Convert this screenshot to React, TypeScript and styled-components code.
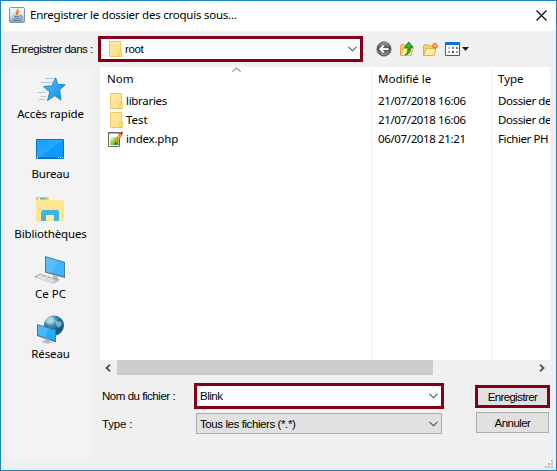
import React from "react";
import styled, { createGlobalStyle } from "styled-components";

const Page = createGlobalStyle`
  body { margin: 0; overflow: hidden; }
  * { box-sizing: border-box; }
  svg { display: block; flex: none; overflow: visible; }
`;

const Dialog = styled.div`
  width: 557px;
  height: 471px;
  display: flex;
  flex-direction: column;
  background: #f0f0f0;
  border: 1px solid #1883c5;
  color: #000;
  font: 11.5px/16px "Noto Sans", "Open Sans", sans-serif;
`;

const Text = styled.span<{ $ls?: number }>`
  white-space: nowrap;
  letter-spacing: ${(p) => p.$ls ?? 0}px;
`;

const Classic = styled(Text)`
  font: 11.5px/16px "Liberation Sans", Arial, sans-serif;
`;

const TitleBar = styled.header`
  height: 30px;
  flex: none;
  display: flex;
  align-items: center;
  padding: 0 9px 2px 8px;
  gap: 5px;
  background: #fff;
  & > svg:last-child { margin-left: auto; }
`;

const LookupBar = styled.div`
  height: 36px;
  flex: none;
  display: flex;
  align-items: center;
  padding-left: 10px;
`;

const LookupLabel = styled(Classic)`
  width: 87px;
`;

const Outlined = styled.div<{ $w: number; $h: number }>`
  width: ${(p) => p.$w}px;
  height: ${(p) => p.$h}px;
  display: flex;
  align-items: center;
  border: 3px solid #84001a;
  background: #fff;
  padding: 0 3px;
  & > svg:last-child { margin-left: auto; }
`;

const LookupField = styled(Outlined)`
  padding-left: 5px;
  gap: 3px;
`;

const Tools = styled.div`
  display: flex;
  align-items: center;
  gap: 7px;
  margin-left: 13px;
`;

const Content = styled.div`
  flex: 1;
  display: flex;
  padding: 0 6px 12px;
  gap: 6px;
`;

const Places = styled.nav`
  width: 87px;
  background: #f3f3f3;
  padding-top: 7px;
`;

const Place = styled.div`
  height: 60px;
  display: flex;
  flex-direction: column;
  align-items: center;
  & > svg { margin-right: 2px; }
`;

const Main = styled.main`
  width: 450px;
  display: flex;
  flex-direction: column;
`;

const List = styled.div`
  height: 293px;
  flex: none;
  display: grid;
  grid-template-columns: 271px 120px 59px;
  background: #fff;
  overflow: hidden;
`;

const Column = styled.div<{ $line?: boolean }>`
  overflow: hidden;
  padding-left: ${(p) => (p.$line ? 6 : 7)}px;
  border-left: ${(p) => (p.$line ? "1px solid #e8f1fb" : "none")};
`;

const Head = styled.div`
  height: 24px;
  display: flex;
  align-items: center;
  position: relative;
`;

const SortMark = styled.div`
  position: absolute;
  left: 125px;
  top: 0;
`;

const Cell = styled.div`
  height: 19px;
  display: flex;
  align-items: center;
  gap: 3px;
`;

const ScrollBar = styled.div`
  height: 15px;
  flex: none;
  display: flex;
  align-items: center;
  padding: 0 5px;
`;

const Thumb = styled.div`
  width: 316px;
  height: 15px;
  margin: 0 auto 0 6px;
  background: #cdcdcd;
`;

const Form = styled.div`
  display: grid;
  grid-template-columns: 94px 250px 31px 75px;
  grid-template-rows: 26px 22px;
  row-gap: 4px;
  padding-top: 8px;
  align-items: center;
  & > span { padding-left: 2px; }
`;

const TypeSelect = styled.div`
  height: 21px;
  width: 246px;
  margin-left: 2px;
  margin-top: -1px;
  display: flex;
  align-items: center;
  padding: 1px 3px 0;
  background: #e1e1e1;
  border: 1px solid #adadad;
  & > svg { margin-left: auto; }
`;

const Button = styled.button<{ $primary?: boolean }>`
  grid-column: 4;
  justify-self: center;
  width: ${(p) => (p.$primary ? 75 : 73)}px;
  height: ${(p) => (p.$primary ? 23 : 21)}px;
  padding: 0;
  margin-top: ${(p) => (p.$primary ? 1 : -3)}px;
  border: ${(p) => (p.$primary ? "3px solid #84001a" : "1px solid #adadad")};
  background: #e1e1e1;
  color: #000;
  display: flex;
  align-items: center;
  justify-content: center;
`;

const Grip = styled.div`
  position: absolute;
  left: 545px;
  top: 460px;
`;

const Chevron = () => (
  <svg width="9" height="6" viewBox="0 0 9 6">
    <path d="M.5.8 4.5 4.8 8.5.8" fill="none" stroke="#505050" strokeWidth="1.1" />
  </svg>
);

const JavaIcon = () => (
  <svg width="16" height="16" viewBox="0 0 16 16">
    <defs>
      <linearGradient id="jv" x1="0" y1="0" x2="0" y2="1">
        <stop stopColor="#f4f6f8" /><stop offset=".5" stopColor="#dce4ea" /><stop offset="1" stopColor="#84a2b8" />
      </linearGradient>
    </defs>
    <rect x=".5" y=".5" width="15" height="15" rx="1" fill="url(#jv)" stroke="#8297a8" />
    <path d="M8.7 1.8C9.5 4 5.6 4.6 7.6 8M10.5 4C7.8 5.3 8.9 6 8.7 8" fill="none" stroke="#e27a25" strokeWidth="1.3" />
    <path d="M4.5 8.8c1 .8 5 .8 6.5 0M5.2 10.8c1.5.7 4 .7 5.2 0M3.6 12.7c2 1.2 7.4 1 8.8-.2M11.4 8.8c2.6-.5 2.3 2-.2 2.3" fill="none" stroke="#47708f" strokeWidth="1" />
  </svg>
);

const CloseIcon = () => (
  <svg width="11" height="11" viewBox="0 0 11 11">
    <path d="m.5.5 10 10m0-10-10 10" stroke="#000" strokeWidth="1.1" />
  </svg>
);

const Folder = () => (
  <svg width="16" height="16" viewBox="0 0 16 16">
    <defs>
      <linearGradient id="fd" x1="0" y1="0" x2="1" y2="1">
        <stop stopColor="#ffe9a2" /><stop offset="1" stopColor="#ffdf85" />
      </linearGradient>
    </defs>
    <path d="M3.5.5h11v9h.5v6H3.5z" fill="url(#fd)" stroke="#eccb5e" />
    <path d="M13 15.5v-4.8l1-1h1.3v5.8z" fill="#ffe796" stroke="#e5bc45" strokeWidth=".8" />
  </svg>
);

const PhpFile = () => (
  <svg width="16" height="16" viewBox="0 0 16 16">
    <defs>
      <linearGradient id="ph" x1="0" y1="0" x2="1" y2="1">
        <stop stopColor="#f3ffe0" /><stop offset=".55" stopColor="#83d335" /><stop offset="1" stopColor="#187b15" />
      </linearGradient>
    </defs>
    <path d="M1.5 1.5h11v14h-11z" fill="#fff" stroke="#666" />
    <path d="M3 6h8.5v8H3z" fill="url(#ph)" />
    <path d="m2 2 1.5 1L5 1l1.5 2L8 1l1.5 2L11 1l1 2" fill="none" stroke="#555" strokeWidth=".8" />
    <path d="m8 12.6.5-3L13.3 2l1.9 1.4-4.9 7.6z" fill="#f5aa25" stroke="#b65b1b" strokeWidth=".7" />
    <path d="m13 2.4 1.3-2L16 1.6l-1.2 1.9z" fill="#8e182b" />
    <path d="m7.8 13 .3-1.6 1.1.8z" fill="#222" />
  </svg>
);

const BackIcon = () => (
  <svg width="16" height="16" viewBox="0 0 16 16">
    <defs>
      <linearGradient id="bk" x1="0" y1="0" x2="0" y2="1">
        <stop stopColor="#a5a5a5" /><stop offset=".45" stopColor="#505050" /><stop offset="1" stopColor="#929292" />
      </linearGradient>
    </defs>
    <circle cx="8" cy="8" r="7" fill="url(#bk)" stroke="#555" />
    <path d="M12.5 8H4.5m3.2-3.5L4.3 8l3.4 3.5" stroke="#f5f5f5" strokeWidth="1.9" fill="none" />
  </svg>
);

const OpenFolder = ({ action }: { action: "up" | "new" }) => (
  <svg width="16" height="16" viewBox="0 0 16 16">
    <path d="M1.5 14V4.5l1-1h3l1.2 1.3h5.8V14z" fill="#f2d070" stroke="#d9ae48" />
    <path d="m1.5 14.5 3-7H14l-2.2 7z" fill="#fff0a3" stroke="#dfb343" />
    {action === "up" ? (
      <path d="M6 13.8c2.8-1.2 3.2-4 2.9-7.5H5.6L9.8 1l4.2 5.3h-2.5c.5 4-1.2 7-5.5 7.5z" fill="#37b52c" stroke="#176f18" strokeWidth=".9" />
    ) : (
      <g stroke="#f1603f" strokeWidth="1.2">
        <path d="M13 1.8v6M10 4.8h6M10.9 2.7l4.2 4.2m0-4.2-4.2 4.2" />
        <circle cx="13" cy="4.8" r="1.3" fill="#ffc56b" stroke="none" />
      </g>
    )}
  </svg>
);

const ViewIcon = () => (
  <svg width="24" height="16" viewBox="0 0 24 16">
    <path d="M.5 1.5h14v13H.5z" fill="#fff" stroke="#076bd2" />
    <path d="M0 1h15v3H0z" fill="#0873dc" />
    <path d="M3 6h2v2H3z" fill="#aac6db" /><path d="M3 10h2v2H3z" fill="#f28154" />
    <path d="M7 6h2v2H7z" fill="#7e85a8" /><path d="M11 6h2v2h-2z" fill="#4b8760" />
    <path d="M7 10h2v2H7z" fill="#224cbf" /><path d="M11 10h2v2h-2z" fill="#c9a40e" />
    <path d="M17 6h7l-3.5 4z" fill="#222" />
  </svg>
);

const QuickIcon = () => (
  <svg width="32" height="32" viewBox="0 0 32 32">
    <defs>
      <linearGradient id="qs" x1="0" y1="0" x2="1" y2="1">
        <stop stopColor="#59c4ff" /><stop offset="1" stopColor="#078be8" />
      </linearGradient>
    </defs>
    <path d="M11 4.5h9M7 8.5h11M11 12.5h5M4 18.5h7M7 22.5h5M5 25.5h6" stroke="#9ecbea" strokeWidth="1" />
    <path d="m21.6 3.8 2.1 6.6 7.5.3-5.6 5.2 1.4 10.2-6.3-4.5-7.2 5 2.3-8.5-6.3-5.7 8.3-.5z" fill="url(#qs)" stroke="#187dc0" strokeWidth=".9" />
  </svg>
);

const DesktopIcon = () => (
  <svg width="32" height="32" viewBox="0 0 32 32">
    <defs>
      <linearGradient id="dk" x1="0" y1="0" x2="1" y2="1">
        <stop stopColor="#159dff" /><stop offset=".5" stopColor="#26aaff" /><stop offset=".51" stopColor="#109aff" /><stop offset="1" stopColor="#079aff" />
      </linearGradient>
    </defs>
    <path d="M2.5 5.5h27v19h-27z" fill="url(#dk)" stroke="#0876b9" />
    <path d="M3 23.5h26" stroke="#1771a7" />
    <path d="M3 23.5h1m20 0h1m1 0h1m1 0h1" stroke="#fff" />
  </svg>
);

const LibraryIcon = () => (
  <svg width="32" height="32" viewBox="0 0 32 32">
    <path d="M2 4h12l1 2h15v21H2z" fill="#ffe591" />
    <path d="M2 6V4q0-1 1-1h11l1.5 1.5L13.5 6z" fill="#f4c735" />
    <path d="M4 4h7v1.5H4z" fill="#fff" /><path d="M6 4h5v1.5H6z" fill="#55b8c7" />
    <path d="M7 27V18l2-2h15l1 2v9h-5v-6h-8v6z" fill="#3db4e6" />
    <path d="M12 21h8v6h-8z" fill="#ffe99f" />
  </svg>
);

const Screen = () => (
  <>
    <path d="m11 2 20 6v16L11 18.5z" fill="#4c7890" />
    <path d="m12 3.2 18 5.5v13.8l-18-5z" fill="#42b4fb" />
    <path d="m12 3.2 12 3.7-7 12-5-1.4z" fill="#69c9ff" opacity=".5" />
    <path d="m19 21 5 1.5v2.2l2 1.2-6 1-5-2.4 4-1z" fill="#aebdc4" />
  </>
);

const PcIcon = () => (
  <svg width="32" height="32" viewBox="0 0 32 32">
    <Screen />
    <path d="m6 20 19 6.2-5.5 3L.8 23z" fill="#c7cdd1" stroke="#8d9ba2" strokeWidth=".7" />
    <path d="m4 22 17 5.6M3 23.5l16 5M9 20.5l-5 3m10-1.5-6 3m11-1.3-6 3" stroke="#eef1f2" strokeWidth=".8" />
  </svg>
);

const NetworkIcon = () => (
  <svg width="32" height="32" viewBox="0 0 32 32">
    <defs>
      <radialGradient id="gl" cx=".35" cy=".25">
        <stop stopColor="#bcecf7" /><stop offset=".55" stopColor="#3f91b5" /><stop offset="1" stopColor="#155c83" />
      </radialGradient>
    </defs>
    <circle cx="20" cy="11.5" r="10" fill="url(#gl)" />
    <path d="m12 6 4-3 4 1-1 4-4 2-3-1m9-3 3 2 3-1 1 4-4 3-2-4z" fill="#bbddda" opacity=".6" />
    <path d="m3 10 19 5.5v13L3 22z" fill="#497b98" />
    <path d="m4 11.3 17 5v10.2L4 21z" fill="#25a8f8" />
    <path d="m4 11.3 11 3.2-4 8.7-7-2.2z" fill="#6bcbff" opacity=".5" />
    <path d="m11 24 5 1.7v2l3 .8-6 1.2-6-2 4-1z" fill="#a9bcc7" />
  </svg>
);

const places = [
  { name: "Accès rapide", icon: <QuickIcon />, ls: -0.1 },
  { name: "Bureau", icon: <DesktopIcon />, ls: -0.2 },
  { name: "Bibliothèques", icon: <LibraryIcon />, ls: -0.15 },
  { name: "Ce PC", icon: <PcIcon />, ls: 0 },
  { name: "Réseau", icon: <NetworkIcon />, ls: -0.15 },
];

const files = [
  { name: "libraries", ls: -0.3, date: "21/07/2018 16:06", type: "Dossier de", icon: <Folder /> },
  { name: "Test", ls: 0, date: "21/07/2018 16:06", type: "Dossier de", icon: <Folder /> },
  { name: "index.php", ls: -0.2, date: "06/07/2018 21:21", type: "Fichier PH", icon: <PhpFile /> },
];

export default function App() {
  return (
    <>
      <Page />
      <Dialog>
        <TitleBar>
          <JavaIcon />
          <Text $ls={-0.24}>Enregistrer le dossier des croquis sous...</Text>
          <CloseIcon />
        </TitleBar>
        <LookupBar>
          <LookupLabel $ls={-0.5}>Enregistrer dans :</LookupLabel>
          <LookupField $w={265} $h={26}>
            <Folder />
            <Classic $ls={-0.4}>root</Classic>
            <Chevron />
          </LookupField>
          <Tools>
            <BackIcon />
            <OpenFolder action="up" />
            <OpenFolder action="new" />
            <ViewIcon />
          </Tools>
        </LookupBar>
        <Content>
          <Places>
            {places.map((p) => (
              <Place key={p.name}>
                {p.icon}
                <Text $ls={p.ls}>{p.name}</Text>
              </Place>
            ))}
          </Places>
          <Main>
            <List>
              <Column>
                <Head>
                  <Text>Nom</Text>
                  <SortMark>
                    <svg width="9" height="6" viewBox="0 0 9 6">
                      <path d="m.5 4.8 4-4 4 4" fill="none" stroke="#606060" />
                    </svg>
                  </SortMark>
                </Head>
                {files.map((f) => (
                  <Cell key={f.name}>{f.icon}<Text $ls={f.ls}>{f.name}</Text></Cell>
                ))}
              </Column>
              <Column $line>
                <Head><Text>Modifié le</Text></Head>
                {files.map((f) => <Cell key={f.name}><Text $ls={-0.37}>{f.date}</Text></Cell>)}
              </Column>
              <Column $line>
                <Head><Text>Type</Text></Head>
                {files.map((f) => <Cell key={f.name}><Text $ls={-0.4}>{f.type}</Text></Cell>)}
              </Column>
            </List>
            <ScrollBar>
              <svg width="6" height="8" viewBox="0 0 6 8"><path d="M5 .7 1.5 4 5 7.3" fill="none" stroke="#505050" strokeWidth="1.8" /></svg>
              <Thumb />
              <svg width="6" height="8" viewBox="0 0 6 8"><path d="M1 .7 4.5 4 1 7.3" fill="none" stroke="#505050" strokeWidth="1.8" /></svg>
            </ScrollBar>
            <Form>
              <Classic $ls={-0.46}>Nom du fichier :</Classic>
              <Outlined $w={250} $h={26}>
                <Classic $ls={-0.5}>Blink</Classic>
                <Chevron />
              </Outlined>
              <Button $primary><Classic $ls={-0.6}>Enregistrer</Classic></Button>
              <Classic $ls={-0.2}>Type :</Classic>
              <TypeSelect>
                <Classic $ls={-0.41}>Tous les fichiers (*.*)</Classic>
                <Chevron />
              </TypeSelect>
              <Button><Classic $ls={-0.55}>Annuler</Classic></Button>
            </Form>
          </Main>
        </Content>
        <Grip>
          <svg width="9" height="9" viewBox="0 0 9 9">
            <path d="M6 0h2v2H6zM3 3h2v2H3zM6 3h2v2H6zM0 6h2v2H0zM3 6h2v2H3zM6 6h2v2H6z" fill="#bfbfbf" />
          </svg>
        </Grip>
      </Dialog>
    </>
  );
}
